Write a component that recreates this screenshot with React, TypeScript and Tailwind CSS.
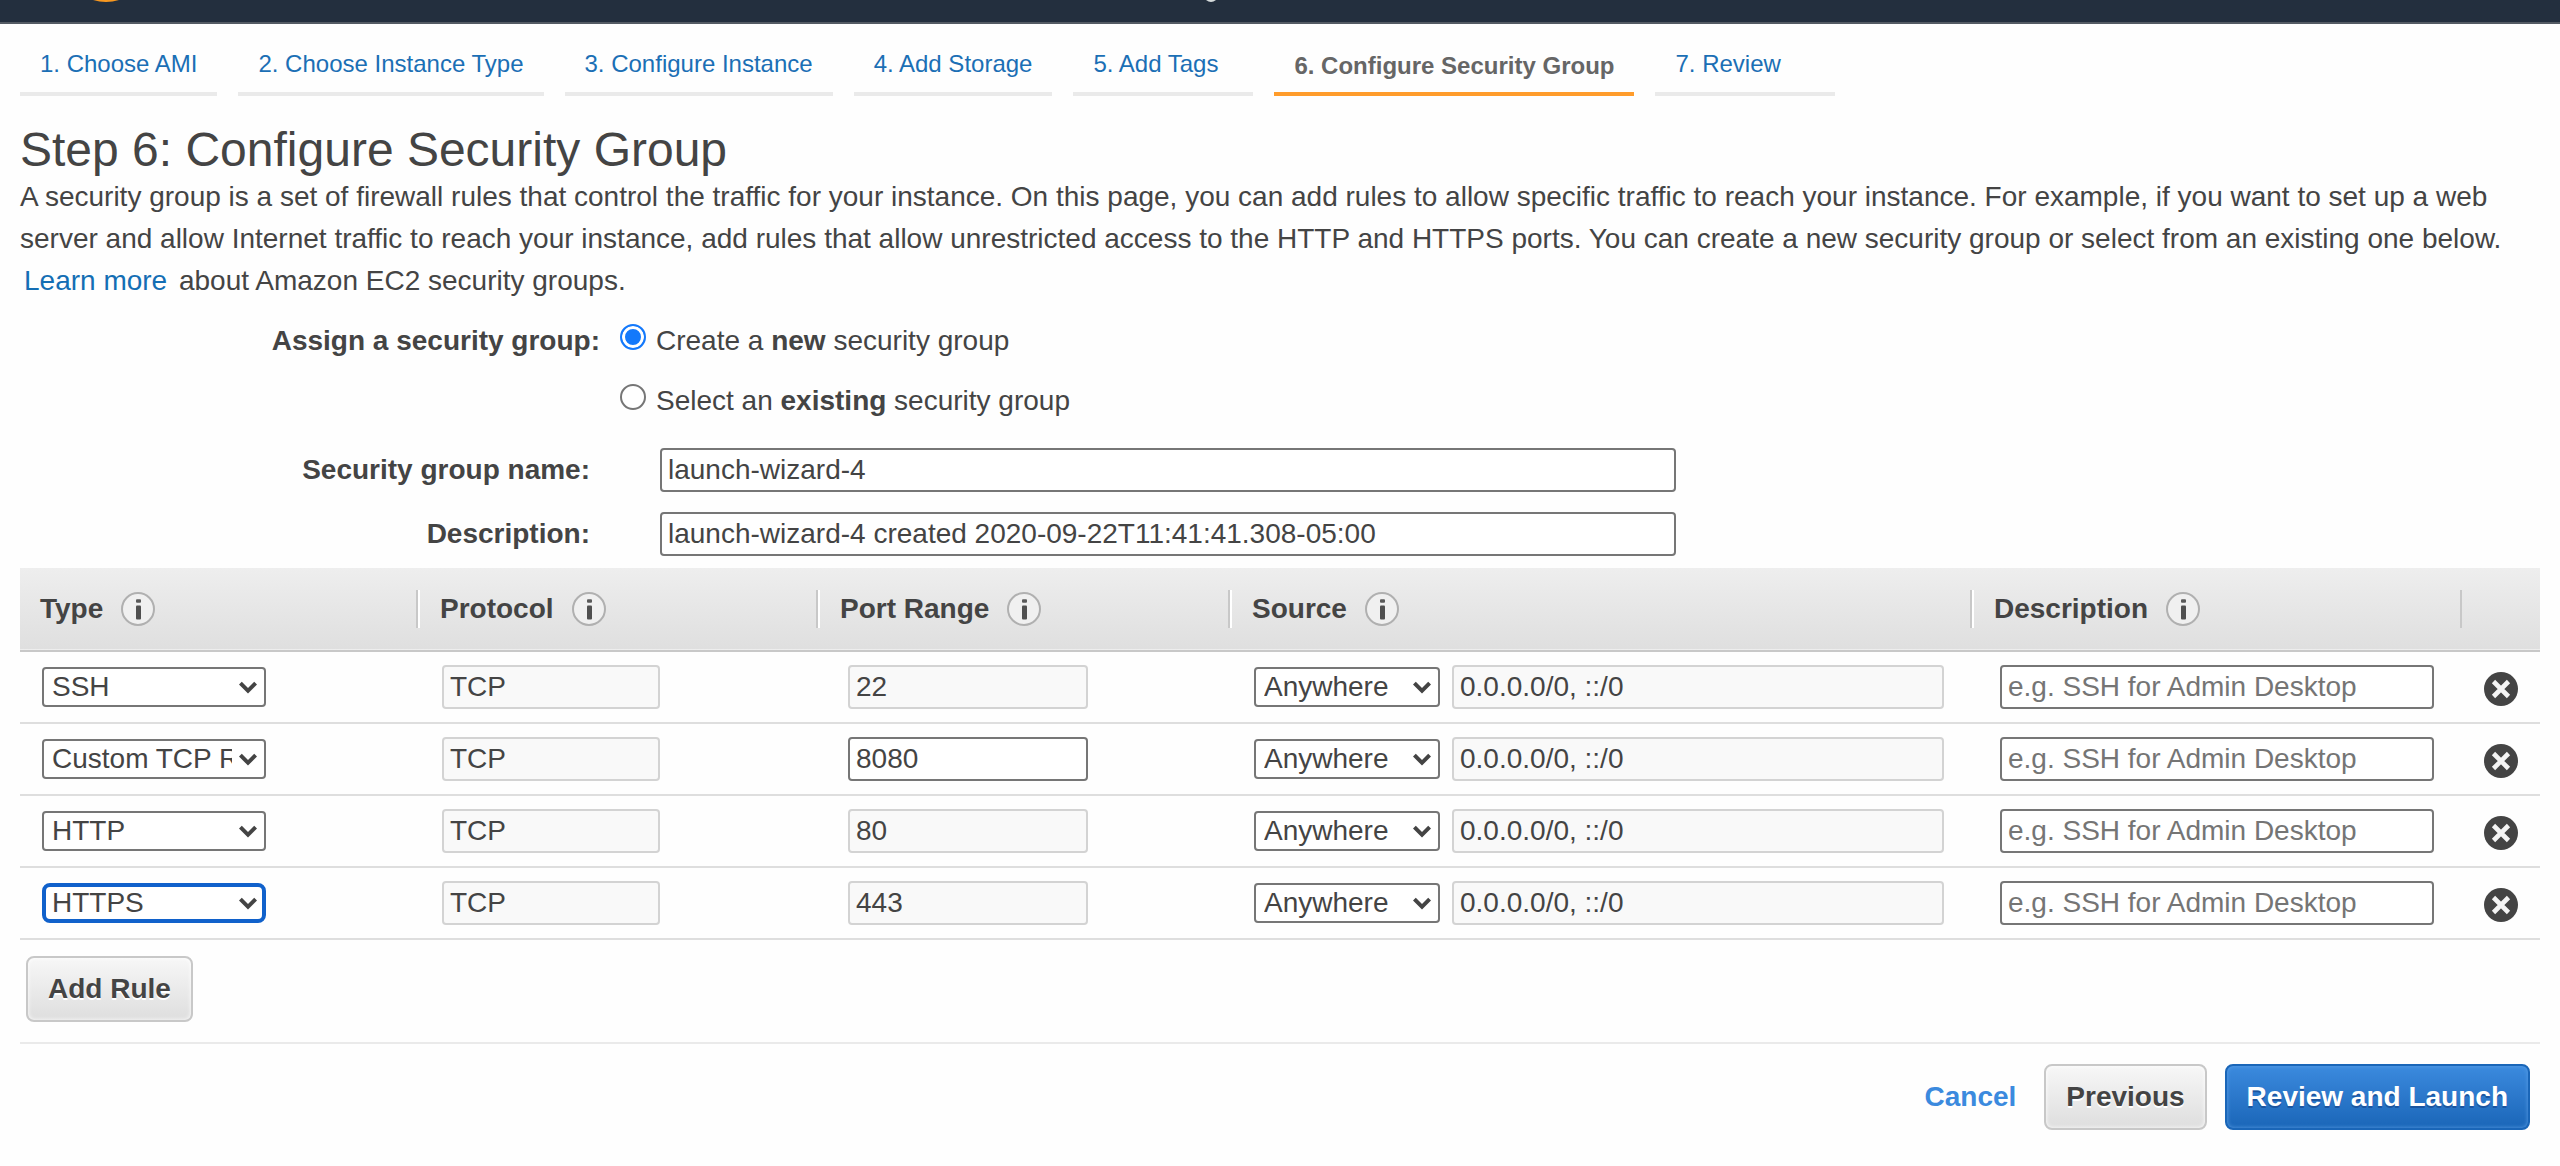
import React from "react";

const steps = [
  "1. Choose AMI",
  "2. Choose Instance Type",
  "3. Configure Instance",
  "4. Add Storage",
  "5. Add Tags",
  "6. Configure Security Group",
  "7. Review",
];
const activeStep = 5;

const columns = [
  { title: "Type", width: "w-[398px]", edges: "border-r-2 border-r-[#c8c8c8]" },
  { title: "Protocol", width: "w-[400px]", edges: "border-x-2 border-r-[#c8c8c8] border-l-white" },
  { title: "Port Range", width: "w-[412px]", edges: "border-x-2 border-r-[#c8c8c8] border-l-white" },
  { title: "Source", width: "", edges: "border-x-2 border-r-[#c8c8c8] border-l-white" },
  { title: "Description", width: "w-[490px]", edges: "border-x-2 border-r-[#c8c8c8] border-l-white" },
];

const rules = [
  { type: "SSH", port: "22" },
  { type: "Custom TCP Rule", port: "8080", editable: true },
  { type: "HTTP", port: "80" },
  { type: "HTTPS", port: "443", focused: true },
];

const fieldBase = "h-11 rounded-[4px] border-2 px-1.5 text-[28px] leading-9 outline-none";
const editableField = "border-[#767676] bg-white text-[#444]";
const lockedField = "border-[#d3d3d3] bg-[#f9f9f9] text-[#444]";

function InfoIcon() {
  return (
    <svg viewBox="0 0 34 34" className="size-[34px] shrink-0" aria-hidden="true">
      <circle cx="17" cy="17" r="16" fill="#f0f0f0" stroke="#b0b0b0" strokeWidth="2" />
      <rect x="15" y="7.2" width="5" height="3.6" rx="1" fill="#5a5a5a" />
      <rect x="15" y="13.5" width="5" height="14" rx="1" fill="#505050" />
    </svg>
  );
}

function RemoveIcon() {
  return (
    <svg viewBox="0 0 34 34" className="size-[34px]" aria-hidden="true">
      <circle cx="17" cy="17" r="17" fill="#444" />
      <path d="M9.5 9.5 L24.5 24.5 M24.5 9.5 L9.5 24.5" stroke="#f4f4f4" strokeWidth="4.6" />
    </svg>
  );
}

function Picker({
  label,
  value,
  width,
  focused,
}: {
  label: string;
  value: string;
  width: string;
  focused?: boolean;
}) {
  const frame = focused ? "border-4 border-[#1061cb] rounded-lg pl-1.5" : "border-2 border-[#767676] rounded-[4px] pl-2";
  return (
    <span className={`relative inline-flex h-10 shrink-0 ${width}`}>
      <select
        aria-label={label}
        defaultValue={value}
        className={`size-full appearance-none bg-white pr-8 text-[28px] leading-8 text-[#444] outline-none ${frame}`}
      >
        <option>{value}</option>
      </select>
      <svg viewBox="0 0 20 14" className="pointer-events-none absolute top-3.5 right-2 h-3.5 w-5" aria-hidden="true">
        <path d="M1 3.4 L3.8 0.8 L10 7 L16.2 0.8 L19 3.4 L10 12.6 Z" fill="#444" />
      </svg>
    </span>
  );
}

function Radio({ id, checked, children }: { id: string; checked?: boolean; children: React.ReactNode }) {
  return (
    <div className="flex h-[60px] items-start gap-2.5">
      <input
        id={id}
        type="radio"
        name="group-mode"
        defaultChecked={checked}
        className="mt-1 size-[26px] appearance-none rounded-full border-2 border-[#767676] bg-white checked:border-[#1479fb] checked:bg-[#1479fb] checked:shadow-[inset_0_0_0_3px_#fff]"
      />
      <label htmlFor={id} className="leading-[42px]">
        {children}
      </label>
    </div>
  );
}

const grayButton =
  "h-[66px] rounded-lg border-2 border-[#c8c8c8] bg-linear-to-b from-[#f7f7f7] to-[#dedede] px-5 font-bold text-[#444] shadow-[inset_0_0_4px_#fff] [text-shadow:0_2px_0_#fff]";

export default function App() {
  return (
    <div className="min-h-screen bg-[#fefefe] font-['Liberation_Sans',Arial,sans-serif] text-[28px] leading-[42px] text-[#444]">
      <header className="h-6 overflow-hidden border-b-2 border-[#545b64] bg-[#232f3e]">
        <svg viewBox="0 0 1240 22" className="h-[22px] w-[1240px]" aria-hidden="true">
          <path d="M93 0 Q106 4 119 0 Z" fill="#f79820" />
          <path d="M1206 0 Q1211 4 1216 0 Z" fill="#d5dbdb" />
        </svg>
      </header>

      <main className="px-5">
        <nav aria-label="Launch steps" className="flex gap-[21px] text-2xl">
          {steps.map((step, i) =>
            i === activeStep ? (
              <a
                key={step}
                href="#"
                aria-current="step"
                className="h-[72px] min-w-[180px] border-b-4 border-[#ff9c2b] px-5 pt-[26px] leading-8 font-bold text-[#666]"
              >
                {step}
              </a>
            ) : (
              <a
                key={step}
                href="#"
                className="h-[72px] min-w-[180px] border-b-4 border-[#eaeaea] px-5 pt-6 leading-8 text-[#1b6fb5]"
              >
                {step}
              </a>
            ),
          )}
        </nav>

        <h1 className="mt-7 text-5xl leading-[52px]">Step 6: Configure Security Group</h1>
        <p>
          A security group is a set of firewall rules that control the traffic for your instance. On this page, you can add
          rules to allow specific traffic to reach your instance. For example, if you want to set up a web server and allow
          Internet traffic to reach your instance, add rules that allow unrestricted access to the HTTP and HTTPS ports. You
          can create a new security group or select from an existing one below.{" "}
          <a href="#" className="mx-1 text-[#146eb4]">
            Learn more
          </a>{" "}
          about Amazon EC2 security groups.
        </p>

        <div role="radiogroup" aria-labelledby="mode-label" className="mt-[18px] flex">
          <span id="mode-label" className="mr-5 w-[580px] text-right font-bold">
            Assign a security group:
          </span>
          <div>
            <Radio id="mode-new" checked>
              Create a <b>new</b> security group
            </Radio>
            <Radio id="mode-existing">
              Select an <b>existing</b> security group
            </Radio>
          </div>
        </div>

        <div className="mt-2 grid grid-cols-[570px_1016px] items-center gap-x-[70px] gap-y-5">
          <label htmlFor="group-name" className="text-right font-bold">
            Security group name:
          </label>
          <input id="group-name" defaultValue="launch-wizard-4" className={`${fieldBase} ${editableField}`} />
          <label htmlFor="group-description" className="text-right font-bold">
            Description:
          </label>
          <input
            id="group-description"
            defaultValue="launch-wizard-4 created 2020-09-22T11:41:41.308-05:00"
            className={`${fieldBase} ${editableField}`}
          />
        </div>

        <table className="mt-3 w-full table-fixed border-collapse">
          <thead>
            <tr className="h-[83px] border-b-2 border-[#c8c8c8] bg-linear-to-b from-[#eee] to-[#dfdfdf]">
              {columns.map((column) => (
                <th key={column.title} scope="col" className={`p-0 text-left font-bold ${column.width}`}>
                  <div className={`flex h-[38px] items-center gap-[18px] pl-5 ${column.edges}`}>
                    {column.title}
                    <InfoIcon />
                  </div>
                </th>
              ))}
              <th scope="col" aria-label="Remove" className="w-[78px] p-0" />
            </tr>
          </thead>
          <tbody>
            {rules.map((rule) => (
              <tr key={rule.type} className="h-[72px] border-b-2 border-[#dedede]">
                <td className="p-0 pl-[22px]">
                  <div className="flex">
                    <Picker label="Type" value={rule.type} width="w-56" focused={rule.focused} />
                  </div>
                </td>
                <td className="p-0 pl-6">
                  <input aria-label="Protocol" readOnly value="TCP" className={`block w-[218px] ${fieldBase} ${lockedField}`} />
                </td>
                <td className="p-0 pl-[30px]">
                  <input
                    aria-label="Port range"
                    readOnly={!rule.editable}
                    defaultValue={rule.port}
                    className={`block w-60 ${fieldBase} ${rule.editable ? editableField : lockedField}`}
                  />
                </td>
                <td className="p-0 pr-7 pl-6">
                  <div className="flex items-center gap-3">
                    <Picker label="Source" value="Anywhere" width="w-[186px]" />
                    <input
                      aria-label="Source addresses"
                      readOnly
                      value="0.0.0.0/0, ::/0"
                      className={`min-w-0 flex-1 ${fieldBase} ${lockedField}`}
                    />
                  </div>
                </td>
                <td className="p-0 px-7">
                  <input
                    aria-label="Description"
                    placeholder="e.g. SSH for Admin Desktop"
                    className={`block w-full placeholder:text-[#757575] ${fieldBase} ${editableField}`}
                  />
                </td>
                <td className="p-0 pt-1 pl-[22px]">
                  <button type="button" aria-label={`Remove ${rule.type} rule`} className="block">
                    <RemoveIcon />
                  </button>
                </td>
              </tr>
            ))}
          </tbody>
        </table>

        <div className="border-b-2 border-[#eaeaea] px-1.5 pt-4 pb-5">
          <button type="button" className={`block ${grayButton}`}>
            Add Rule
          </button>
        </div>

        <footer className="flex items-center justify-end pt-5 pr-2.5">
          <button type="button" className="mr-7 font-bold text-[#3b8ade]">
            Cancel
          </button>
          <button type="button" className={`mr-[18px] ${grayButton}`}>
            Previous
          </button>
          <button
            type="button"
            className="h-[66px] rounded-lg border-2 border-[#1a66b8] bg-linear-to-b from-[#3b8ade] to-[#1a66b8] px-5 font-bold text-white shadow-[inset_0_0_4px_#5b9fe6] [text-shadow:0_2px_0_#1b55a0]"
          >
            Review and Launch
          </button>
        </footer>
      </main>
    </div>
  );
}
